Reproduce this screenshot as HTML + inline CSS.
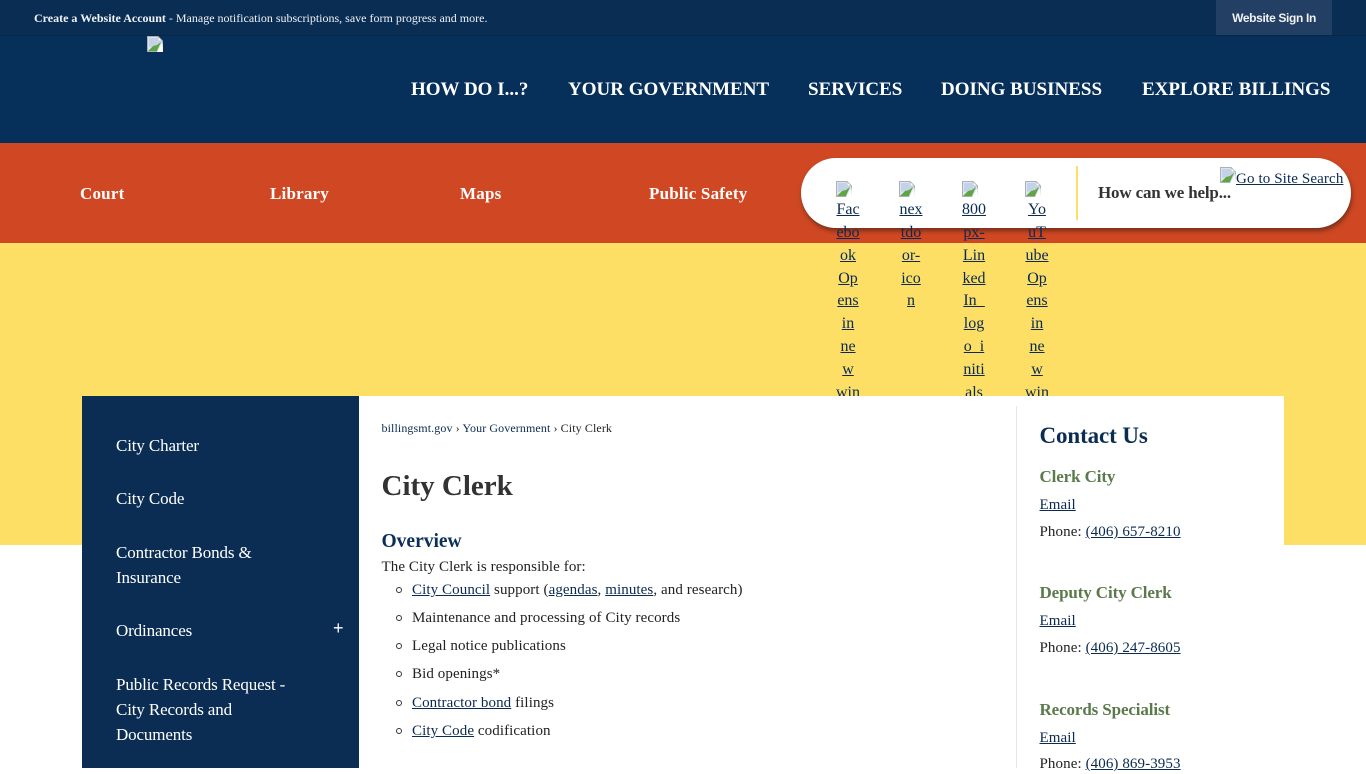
<!DOCTYPE html>
<html lang="en">
<head>
<meta charset="utf-8">
<title>City Clerk</title>
<style>
html,body{margin:0;padding:0}
body{width:1366px;height:768px;overflow:hidden;position:relative;background:#fff;font-family:"Liberation Serif",serif;font-size:16px;color:#222}
a{color:#0a2a52;text-decoration:underline}
.abs{position:absolute;white-space:nowrap}
.bi{position:absolute;width:16px;height:16px}
.soc{position:absolute;top:199px;width:26px;text-align:center;font-size:16px;line-height:22.86px;white-space:normal;z-index:4}
.nav{position:absolute;top:79px;font-size:19px;font-weight:bold;color:#fff;line-height:22px;white-space:nowrap}
.sub{position:absolute;top:184px;font-size:17px;font-weight:bold;color:#fff;line-height:20px;white-space:nowrap;letter-spacing:.2px}
.side{position:absolute;left:116px;color:#fff;font-size:17px;line-height:25px;white-space:nowrap;letter-spacing:-.13px}
.green{position:absolute;left:1039.5px;font-size:17px;font-weight:bold;color:#5b7a4c;line-height:20px;white-space:nowrap;letter-spacing:-.12px}
.t{position:absolute;white-space:nowrap;line-height:20px;color:#222;font-size:15px;letter-spacing:.09px}
.bul{position:absolute;left:396px;width:4px;height:4px;border:1px solid #333;border-radius:50%}
</style>
</head>
<body>
<svg width="0" height="0" style="position:absolute">
<defs>
<symbol id="broken" viewBox="0 0 16 16">
<path d="M.5.5H11L15.5 5V15.5H.5Z" fill="#dfe5ec" stroke="#a9b0b8"/>
<path d="M11 .5V5H15.5Z" fill="#fff" stroke="#a9b0b8" stroke-width=".7"/>
<path d="M2 2H10V6H14V8L2 11Z" fill="#c3d2e8"/>
<path d="M1 15L6 10L10 9L14 6L10 15Z" fill="#5fa544"/>
<path d="M15.5 7L10 16H16Z" fill="#fff"/>
</symbol>
</defs>
</svg>

<div style="position:absolute;left:0;top:0;width:1366px;height:143px;background:#062f59"></div>
<div style="position:absolute;left:0;top:0;width:1366px;height:35px;background:#0a2d54;border-bottom:1px solid #082848"></div>
<div class="abs" style="left:34px;top:9px;font-size:12px;line-height:18px;color:#f0f2f6"><b>Create a Website Account</b> - Manage notification subscriptions, save form progress and more.</div>
<div style="position:absolute;left:1216px;top:0;width:116px;height:35px;background:#243f64;color:#f0f2f6;font:bold 12px/36px 'Liberation Sans',sans-serif;letter-spacing:-.35px;text-align:center">Website Sign In</div>
<svg class="bi" style="left:147px;top:36px"><use href="#broken"/></svg>

<div class="nav" style="left:411px">HOW DO I...?</div>
<div class="nav" style="left:568px">YOUR GOVERNMENT</div>
<div class="nav" style="left:808px">SERVICES</div>
<div class="nav" style="left:941px">DOING BUSINESS</div>
<div class="nav" style="left:1142px">EXPLORE BILLINGS</div>

<div style="position:absolute;left:0;top:143px;width:1366px;height:100px;background:#d04823"></div>
<div class="sub" style="left:80px">Court</div>
<div class="sub" style="left:270px">Library</div>
<div class="sub" style="left:460px">Maps</div>
<div class="sub" style="left:649px">Public Safety</div>

<div style="position:absolute;left:0;top:243px;width:1366px;height:302px;background:#fddf66"></div>

<div style="position:absolute;left:801px;top:158px;width:550px;height:70px;border-radius:35px;background:#fff;box-shadow:1px 3px 5px rgba(60,30,20,.6);z-index:3"></div>
<div style="position:absolute;left:1076px;top:166px;width:2px;height:54px;background:#fddf66;z-index:4"></div>
<div class="abs" style="left:1098px;top:183px;font-size:17px;font-weight:bold;line-height:20px;letter-spacing:-.17px;color:#333;z-index:4">How can we help...</div>
<svg class="bi" style="left:1220px;top:167px;z-index:5"><use href="#broken"/></svg>
<a class="abs" href="#" style="left:1236px;top:170px;font-size:15px;line-height:18px;letter-spacing:.12px;z-index:5">Go to Site Search</a>

<svg class="bi" style="left:836px;top:181px;z-index:5"><use href="#broken"/></svg>
<svg class="bi" style="left:899px;top:181px;z-index:5"><use href="#broken"/></svg>
<svg class="bi" style="left:962px;top:181px;z-index:5"><use href="#broken"/></svg>
<svg class="bi" style="left:1025px;top:181px;z-index:5"><use href="#broken"/></svg>
<div class="soc" style="left:835px"><a href="#">Fac<br>ebo<br>ok<br>Op<br>ens<br>in<br>ne<br>w<br>win</a></div>
<div class="soc" style="left:898px"><a href="#">nex<br>tdo<br>or-<br>ico<br>n</a></div>
<div class="soc" style="left:961px"><a href="#">800<br>px-<br>Lin<br>ked<br>In_<br>log<br>o_i<br>niti<br>als</a></div>
<div class="soc" style="left:1024px"><a href="#">Yo<br>uT<br>ube<br>Op<br>ens<br>in<br>ne<br>w<br>win</a></div>

<div style="position:absolute;left:82px;top:396px;width:277px;height:372px;background:#0b2d53;z-index:6"></div>
<div style="position:absolute;left:359px;top:396px;width:925px;height:372px;background:#fff;z-index:6"></div>
<div style="position:absolute;left:1016px;top:406px;width:1px;height:362px;background:#e6e6e6;z-index:7"></div>

<div style="position:absolute;left:0;top:0;width:1366px;height:768px;z-index:8">
<div class="side" style="top:433px">City Charter</div>
<div class="side" style="top:486px">City Code</div>
<div class="side" style="top:540px">Contractor Bonds &amp;<br>Insurance</div>
<div class="side" style="top:618px">Ordinances</div>
<div class="abs" style="left:333px;top:616px;font:18px/24px 'Liberation Sans',sans-serif;color:#fff">+</div>
<div class="side" style="top:672px">Public Records Request -<br>City Records and<br>Documents</div>

<div class="abs" style="left:381.5px;top:419px;font-size:12px;line-height:18px;letter-spacing:.1px;color:#222"><a href="#" style="text-decoration:none">billingsmt.gov</a> › <a href="#" style="text-decoration:none">Your Government</a> › City Clerk</div>
<div class="abs" style="left:381.5px;top:469px;font-size:29px;font-weight:bold;line-height:34px;color:#333">City Clerk</div>
<div class="abs" style="left:381.5px;top:530px;font-size:19.5px;font-weight:bold;line-height:23px;color:#0a2f59">Overview</div>
<div class="t" style="left:381.5px;top:557px">The City Clerk is responsible for:</div>
<div class="bul" style="top:587px"></div>
<div class="t" style="left:412px;top:580px"><a href="#">City Council</a> support (<a href="#">agendas</a>, <a href="#">minutes</a>, and research)</div>
<div class="bul" style="top:615px"></div>
<div class="t" style="left:412px;top:608px">Maintenance and processing of City records</div>
<div class="bul" style="top:643px"></div>
<div class="t" style="left:412px;top:636px">Legal notice publications</div>
<div class="bul" style="top:671px"></div>
<div class="t" style="left:412px;top:664px">Bid openings*</div>
<div class="bul" style="top:700px"></div>
<div class="t" style="left:412px;top:693px"><a href="#">Contractor bond</a> filings</div>
<div class="bul" style="top:728px"></div>
<div class="t" style="left:412px;top:721px"><a href="#">City Code</a> codification</div>

<div class="abs" style="left:1039.5px;top:422px;font-size:23px;font-weight:bold;line-height:27px;letter-spacing:-.1px;color:#0b2d53">Contact Us</div>
<div class="green" style="top:467px">Clerk City</div>
<div class="t" style="left:1039.5px;top:495px"><a href="#">Email</a></div>
<div class="t" style="left:1039.5px;top:522px">Phone: <a href="#">(406) 657-8210</a></div>
<div class="green" style="top:583px">Deputy City Clerk</div>
<div class="t" style="left:1039.5px;top:611px"><a href="#">Email</a></div>
<div class="t" style="left:1039.5px;top:638px">Phone: <a href="#">(406) 247-8605</a></div>
<div class="green" style="top:700px">Records Specialist</div>
<div class="t" style="left:1039.5px;top:728px"><a href="#">Email</a></div>
<div class="t" style="left:1039.5px;top:754px">Phone: <a href="#">(406) 869-3953</a></div>
</div>
</body>
</html>
